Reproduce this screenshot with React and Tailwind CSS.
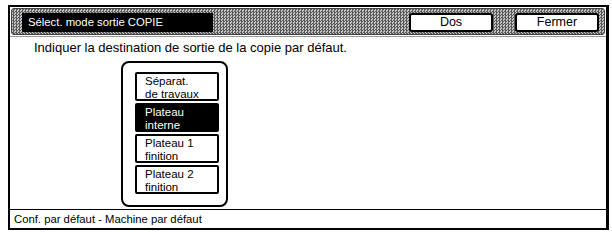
import React from 'react';

const options = [
  { label: ['Séparat.', 'de travaux'], active: false },
  { label: ['Plateau', 'interne'], active: true },
  { label: ['Plateau 1', 'finition'], active: false },
  { label: ['Plateau 2', 'finition'], active: false },
];

const dither =
  'bg-[#8f8f8f] bg-[image:repeating-conic-gradient(#5a5a5a_0_25%,#c4c4c4_0_50%)] bg-[length:3px_3px]';

const HeaderButton = ({ children }) => (
  <button className="w-[84px] h-[19px] bg-white border-2 border-black rounded-[3px] text-[12.5px] leading-none text-black flex items-center justify-center">
    {children}
  </button>
);

const App = () => {
  return (
    <div
      className="w-[612px] h-[232px] bg-white pt-[5px] pl-[8px]"
      style={{ fontFamily: '"Liberation Sans", Arial, sans-serif' }}
    >
      <div className="w-[601px] h-[225px] border-2 border-r-[3px] border-black flex flex-col bg-white">
        {/* header */}
        <div className={`h-[27px] mx-[1px] mt-[1px] rounded-[3px] border border-[#444] flex items-center pl-[10px] pr-[5px] pt-[2px] ${dither}`}>
          <div className="w-[191px] h-[19px] bg-black text-white text-[11.3px] flex items-center pl-[6px]">
            Sélect. mode sortie COPIE
          </div>
          <div className="flex-1" />
          <div className="flex gap-[22px]">
            <HeaderButton>Dos</HeaderButton>
            <HeaderButton>Fermer</HeaderButton>
          </div>
        </div>

        {/* content */}
        <div className="flex-1 flex flex-col border-t border-[#999] mt-[1px]">
          <div className="pl-[24px] pt-[3px] text-[13px] leading-[15px] text-black">
            Indiquer la destination de sortie de la copie par défaut.
          </div>
          <div className="ml-[111px] mt-[6px] w-[107px] h-[146px] border-2 border-black rounded-[8px] flex flex-col gap-[2px] pt-[9px] pl-[12px]">
            {options.map((o, i) => (
              <div
                key={i}
                className={`w-[84px] h-[29px] border-2 rounded-[2px] text-[11.5px] leading-[12.5px] pl-[8px] pt-[1px] ${
                  o.active ? 'bg-black text-white border-black' : 'bg-white text-black border-black'
                }`}
              >
                <div>{o.label[0]}</div>
                <div>{o.label[1]}</div>
              </div>
            ))}
          </div>
        </div>

        {/* footer */}
        <div className="h-[19px] border-t border-black flex items-center pl-[4px] text-[11.3px] text-black">
          Conf. par défaut - Machine par défaut
        </div>
      </div>
    </div>
  );
};

export default App;
